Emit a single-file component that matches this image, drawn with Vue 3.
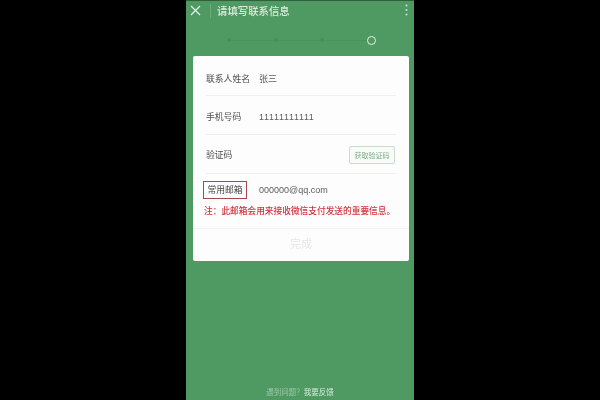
<script setup>
const steps = [0, 1, 2]
</script>

<template>
  <div class="screen">
    <div class="phone">
      <header class="bar">
        <svg class="close" width="11" height="11" viewBox="0 0 11 11">
          <path d="M1 1L10 10M10 1L1 10" stroke="#e4f0e6" stroke-width="1.3" fill="none" />
        </svg>
        <span class="sep"></span>
        <span class="title">请填写联系信息</span>
        <svg class="more" width="3" height="13" viewBox="0 0 3 13">
          <circle cx="1.5" cy="1.5" r="1" fill="#cfe3d3" />
          <circle cx="1.5" cy="6" r="1" fill="#cfe3d3" />
          <circle cx="1.5" cy="10.5" r="1" fill="#cfe3d3" />
        </svg>
      </header>

      <div class="progress">
        <template v-for="s in steps" :key="s">
          <span class="dot"></span>
          <span class="line"></span>
        </template>
        <span class="ring"></span>
      </div>

      <section class="card">
        <div class="row first">
          <span class="label">联系人姓名</span>
          <span class="value">张三</span>
        </div>
        <div class="row second">
          <span class="label">手机号码</span>
          <span class="value num">11111111111</span>
        </div>
        <div class="row third">
          <span class="label">验证码</span>
          <button class="code">获取验证码</button>
        </div>
        <div class="mail">
          <div class="mail-line">
            <span class="label boxed">常用邮箱</span>
            <span class="value mail-value">000000@qq.com</span>
          </div>
          <p class="note">注：此邮箱会用来接收微信支付发送的重要信息。</p>
        </div>
        <div class="done">完成</div>
      </section>

      <footer class="help">遇到问题？<span class="link">我要反馈</span></footer>
    </div>
  </div>
</template>

<style scoped>
.screen {
  width: 600px;
  height: 400px;
  background: #000;
  display: flex;
  justify-content: center;
  overflow: hidden;
  font-family: "Noto Sans CJK SC", "Liberation Sans", sans-serif;
}
.phone {
  width: 228px;
  height: 400px;
  background: #4f9a63;
  border-top: 1px solid #2f5f3c;
  box-sizing: border-box;
  display: flex;
  flex-direction: column;
  filter: blur(0.6px);
}
.bar {
  height: 19px;
  display: flex;
  align-items: center;
  padding: 0 6px 0 4px;
}
.close { flex: none; }
.sep {
  width: 1px;
  height: 14px;
  background: #6dab7d;
  margin-left: 9px;
}
.title {
  margin-left: 6px;
  font-size: 10.4px;
  font-weight: 500;
  color: #dcebdf;
  flex: 1;
}
.progress {
  height: 36px;
  padding: 4px 0 0 41px;
  box-sizing: border-box;
  display: flex;
  align-items: center;
}
.dot {
  width: 4px;
  height: 4px;
  border-radius: 50%;
  background: #448d57;
  flex: none;
}
.line {
  width: 42.7px;
  height: 1px;
  background: #4a935d;
  flex: none;
}
.ring {
  width: 7px;
  height: 7px;
  border: 1.5px solid #e6f1e8;
  border-radius: 50%;
  flex: none;
}
.card {
  width: 216px;
  height: 205px;
  margin-left: 7px;
  background: #fdfdfd;
  border-radius: 2px;
  display: flex;
  flex-direction: column;
}
.row {
  height: 39px;
  margin-left: 13px;
  margin-right: 13px;
  border-bottom: 1px solid #eeeeee;
  display: flex;
  align-items: center;
  box-sizing: border-box;
}
.first { height: 40px; padding-top: 6px; }
.second { padding-top: 3px; }
.third { padding-top: 1px; }
.label {
  width: 53px;
  font-size: 8.8px;
  color: #4c4c4c;
  flex: none;
  white-space: nowrap;
}
.value {
  font-size: 9px;
  color: #5c5c5c;
}
.num {
  letter-spacing: 0.65px;
  font-family: "Liberation Sans", sans-serif;
}
.code {
  margin-left: auto;
  margin-right: 1px;
  width: 46px;
  height: 18px;
  padding: 0;
  background: #f8fbf8;
  border: 1px solid #c9dccd;
  border-radius: 2px;
  font-family: inherit;
  font-size: 7px;
  color: #7fae8b;
}
.mail {
  height: 55px;
  padding: 7px 0 0 10px;
  box-sizing: border-box;
  border-bottom: 1px solid #f1f1f1;
}
.mail-line {
  display: flex;
  align-items: center;
}
.boxed {
  width: 44px;
  height: 18px;
  line-height: 15px;
  text-align: center;
  border: 1px solid #a5474c;
  box-sizing: border-box;
  color: #444;
  font-size: 8.8px;
}
.mail-value {
  margin-left: 12px;
  font-family: "Liberation Sans", sans-serif;
}
.note {
  margin: 6px 0 0 1px;
  font-size: 8.7px;
  font-weight: 500;
  line-height: 12px;
  color: #cf343d;
  white-space: nowrap;
}
.done {
  flex: 1;
  display: flex;
  align-items: center;
  justify-content: center;
  padding-bottom: 4px;
  font-size: 11px;
  color: #e4e7e4;
}
.help {
  margin-top: auto;
  height: 15px;
  text-align: center;
  font-size: 7.5px;
  line-height: 14px;
  color: #9cc7a8;
}
.link { color: #d8ebdd; }
</style>
